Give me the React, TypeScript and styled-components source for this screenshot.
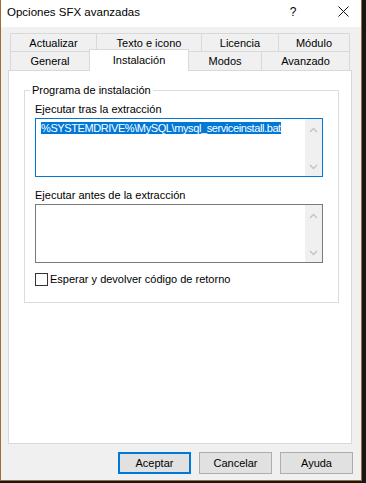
import React from 'react';
import styled, { createGlobalStyle } from 'styled-components';

const GlobalStyle = createGlobalStyle`
  html, body {
    margin: 0;
    padding: 0;
    background: #161616;
  }
  body {
    font-family: "Liberation Sans", Arial, sans-serif;
    font-size: 11px;
    color: #000;
  }
`;

const rowOne = [
  { label: 'Actualizar', w: 87 },
  { label: 'Texto e icono', w: 106 },
  { label: 'Licencia', w: 78 },
  { label: 'Módulo', w: 72 },
];

const rowTwo = [
  { label: 'General', w: 80 },
  { label: 'Instalación', w: 100, active: true },
  { label: 'Modos', w: 74 },
  { label: 'Avanzado', w: 89 },
];

const Chevron = ({ up }: { up?: boolean }) => (
  <svg width="9" height="6" viewBox="0 0 9 6">
    <path
      d={up ? 'M1 5 L4.5 1.5 L8 5' : 'M1 1 L4.5 4.5 L8 1'}
      fill="none"
      stroke="#c4c4c4"
      strokeWidth="1.4"
    />
  </svg>
);

const CloseIcon = () => (
  <svg width="11" height="11" viewBox="0 0 11 11">
    <path d="M0.5 0.5 L10.5 10.5 M10.5 0.5 L0.5 10.5" stroke="#111" strokeWidth="1" />
  </svg>
);

const App = () => {
  return (
    <>
      <GlobalStyle />
      <Window>
        <TitleBar>
          <Title>Opciones SFX avanzadas</Title>
          <HelpButton>?</HelpButton>
          <CloseButton>
            <CloseIcon />
          </CloseButton>
        </TitleBar>

        <Body>
          <TabStrip>
            <TabRow $h={19}>
              {rowOne.map((t) => (
                <Tab key={t.label} $w={t.w} $h={19}>
                  {t.label}
                </Tab>
              ))}
            </TabRow>
            <TabRow $h={20}>
              {rowTwo.map((t) => (
                <Tab key={t.label} $w={t.w} $h={20} $active={t.active}>
                  {t.label}
                </Tab>
              ))}
            </TabRow>
          </TabStrip>

          <Panel>
            <GroupBox>
              <Legend>Programa de instalación</Legend>

              <FieldLabel>Ejecutar tras la extracción</FieldLabel>
              <TextBox $focused>
                <TextArea>
                  <Selected>%SYSTEMDRIVE%\MySQL\mysql_serviceinstall.bat</Selected>
                </TextArea>
                <ScrollBar>
                  <Chevron up />
                  <Chevron />
                </ScrollBar>
              </TextBox>

              <FieldLabel $gap={11}>Ejecutar antes de la extracción</FieldLabel>
              <TextBox>
                <TextArea />
                <ScrollBar>
                  <Chevron up />
                  <Chevron />
                </ScrollBar>
              </TextBox>

              <CheckRow>
                <CheckBox />
                <span>Esperar y devolver código de retorno</span>
              </CheckRow>
            </GroupBox>
          </Panel>

          <Footer>
            <Button $default>Aceptar</Button>
            <Button>Cancelar</Button>
            <Button>Ayuda</Button>
          </Footer>
        </Body>
      </Window>
    </>
  );
};

const Window = styled.div`
  width: 360px;
  height: 480px;
  display: flex;
  flex-direction: column;
  background: #f0f0f0;
  border-left: 1px solid #9e6b3a;
  border-right: 1px solid #9e6b3a;
  border-bottom: 1px solid #9e6b3a;
`;

const TitleBar = styled.div`
  height: 27px;
  display: flex;
  align-items: center;
  background: #fff;
  padding-left: 6px;
  padding-bottom: 4px;
  box-sizing: border-box;
`;

const Title = styled.div`
  flex: 1;
  font-size: 11.5px;
`;

const HelpButton = styled.div`
  width: 16px;
  margin-right: 24px;
  text-align: center;
  font-size: 12px;
`;

const CloseButton = styled.div`
  width: 36px;
  display: flex;
  justify-content: center;
  align-items: center;
`;

const Body = styled.div`
  flex: 1;
  display: flex;
  flex-direction: column;
  padding: 6px 8px 0 7px;
`;

const TabStrip = styled.div`
  display: flex;
  flex-direction: column;
  padding-left: 2px;
`;

const TabRow = styled.div<{ $h: number }>`
  display: flex;
  align-items: flex-start;
  height: ${(p) => p.$h}px;
  margin-bottom: -1px;
`;

const Tab = styled.div<{ $w: number; $h: number; $active?: boolean }>`
  box-sizing: border-box;
  width: ${(p) => p.$w}px;
  height: ${(p) => (p.$active ? p.$h + 2 : p.$h)}px;
  margin-top: ${(p) => (p.$active ? -2 : 0)}px;
  margin-right: -1px;
  display: flex;
  justify-content: center;
  align-items: center;
  padding-bottom: ${(p) => (p.$active ? 2 : 0)}px;
  border: 1px solid #d9d9d9;
  border-bottom: ${(p) => (p.$active ? 'none' : '1px solid #d9d9d9')};
  background: ${(p) => (p.$active ? '#fff' : '#f0f0f0')};
  position: relative;
  z-index: ${(p) => (p.$active ? 2 : 0)};
  font-size: 11px;
  white-space: nowrap;
`;

const Panel = styled.div`
  position: relative;
  z-index: 1;
  box-sizing: border-box;
  height: 374px;
  margin-right: 1px;
  background: #fff;
  border: 1px solid #d9d9d9;
  padding: 12px 12px 0 15px;
`;

const GroupBox = styled.fieldset`
  margin: 0;
  padding: 0 15px 15px 10px;
  border: 1px solid #dcdcdc;
  display: flex;
  flex-direction: column;
  align-items: flex-start;
`;

const Legend = styled.legend`
  margin-left: -5px;
  padding: 0 2px;
  line-height: 14px;
  font-size: 11px;
`;

const FieldLabel = styled.div<{ $gap?: number }>`
  margin-top: ${(p) => p.$gap ?? 5}px;
  line-height: 15px;
  font-size: 11px;
`;

const TextBox = styled.div<{ $focused?: boolean }>`
  box-sizing: border-box;
  width: 288px;
  height: 59px;
  margin-top: 1px;
  display: flex;
  background: #fff;
  border: 1px solid ${(p) => (p.$focused ? '#0078d7' : '#7a7a7a')};
`;

const TextArea = styled.div`
  flex: 1;
  padding: 3px 0 0 5px;
  line-height: 13px;
  font-size: 11px;
  letter-spacing: -0.4px;
  white-space: nowrap;
  overflow: hidden;
`;

const Selected = styled.span`
  background: #0078d7;
  color: #fff;
`;

const ScrollBar = styled.div`
  width: 17px;
  background: #f0f0f0;
  display: flex;
  flex-direction: column;
  justify-content: space-between;
  align-items: center;
  padding: 8px 0 6px;
`;

const CheckRow = styled.div`
  margin-top: 9px;
  display: flex;
  align-items: center;
  gap: 2px;
  line-height: 15px;
  font-size: 11px;
`;

const CheckBox = styled.span`
  box-sizing: border-box;
  width: 13px;
  height: 13px;
  border: 1px solid #333;
  background: #fff;
`;

const Footer = styled.div`
  display: flex;
  justify-content: flex-end;
  gap: 8px;
  margin-top: 8px;
`;

const Button = styled.button<{ $default?: boolean }>`
  box-sizing: border-box;
  width: 73px;
  height: 22px;
  padding: 0;
  font-family: "Liberation Sans", Arial, sans-serif;
  font-size: 11px;
  color: #000;
  background: #e1e1e1;
  border: ${(p) => (p.$default ? '2px solid #0078d7' : '1px solid #adadad')};
`;

export default App;
